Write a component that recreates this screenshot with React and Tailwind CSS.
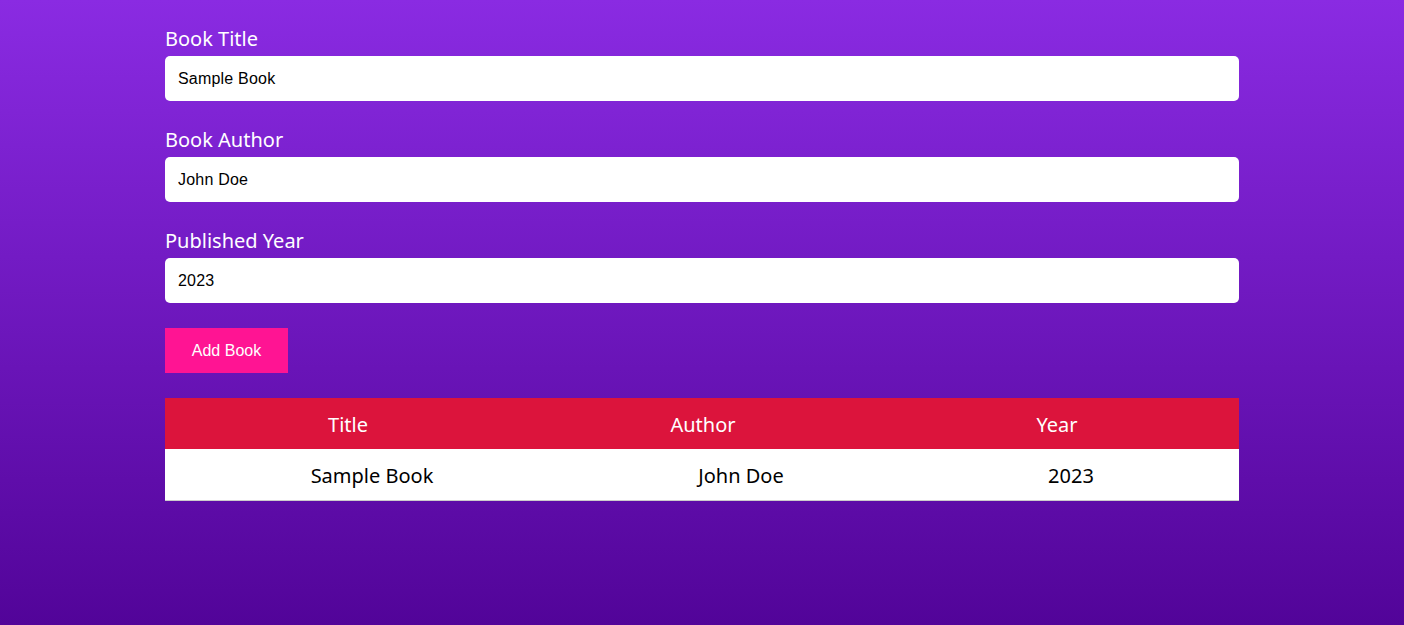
export default function App() {
  const fields = [
    { label: 'Book Title', value: 'Sample Book' },
    { label: 'Book Author', value: 'John Doe' },
    { label: 'Published Year', value: '2023' },
  ]

  return (
    <div className="min-h-[625px] bg-[linear-gradient(#8a2be2,#520499)] font-['Noto_Sans',sans-serif]">
      <div className="mx-auto w-[1074px] pt-[25px]">
        {fields.map((f) => (
          <div key={f.label} className="mb-[25px]">
            <label className="mb-[4px] block text-[20px] leading-[27px] text-white">{f.label}</label>
            <input
              type="text"
              defaultValue={f.value}
              className="block h-[45px] w-full rounded-[5px] bg-white px-[13px] font-['Liberation_Sans',sans-serif] text-[16px] tracking-[0.2px] text-black outline-none"
            />
          </div>
        ))}

        <button className="h-[45px] w-[123px] bg-[#ff1493] font-['Liberation_Sans',sans-serif] text-[16px] text-white">
          Add Book
        </button>

        {/* Table */}
        <div className="mt-[25px]">
          <div className="grid h-[51px] grid-cols-[366px_344px_364px] items-center bg-[#dc143c] pt-[2px] text-center text-[20px] text-white">
            <div>Title</div>
            <div>Author</div>
            <div>Year</div>
          </div>
          <div className="grid h-[52px] grid-cols-[414px_324px_336px] items-center border-b border-[#cccccc] bg-white pt-[2px] text-center text-[20px] text-black">
            <div>Sample Book</div>
            <div>John Doe</div>
            <div>2023</div>
          </div>
        </div>
      </div>
    </div>
  )
}
